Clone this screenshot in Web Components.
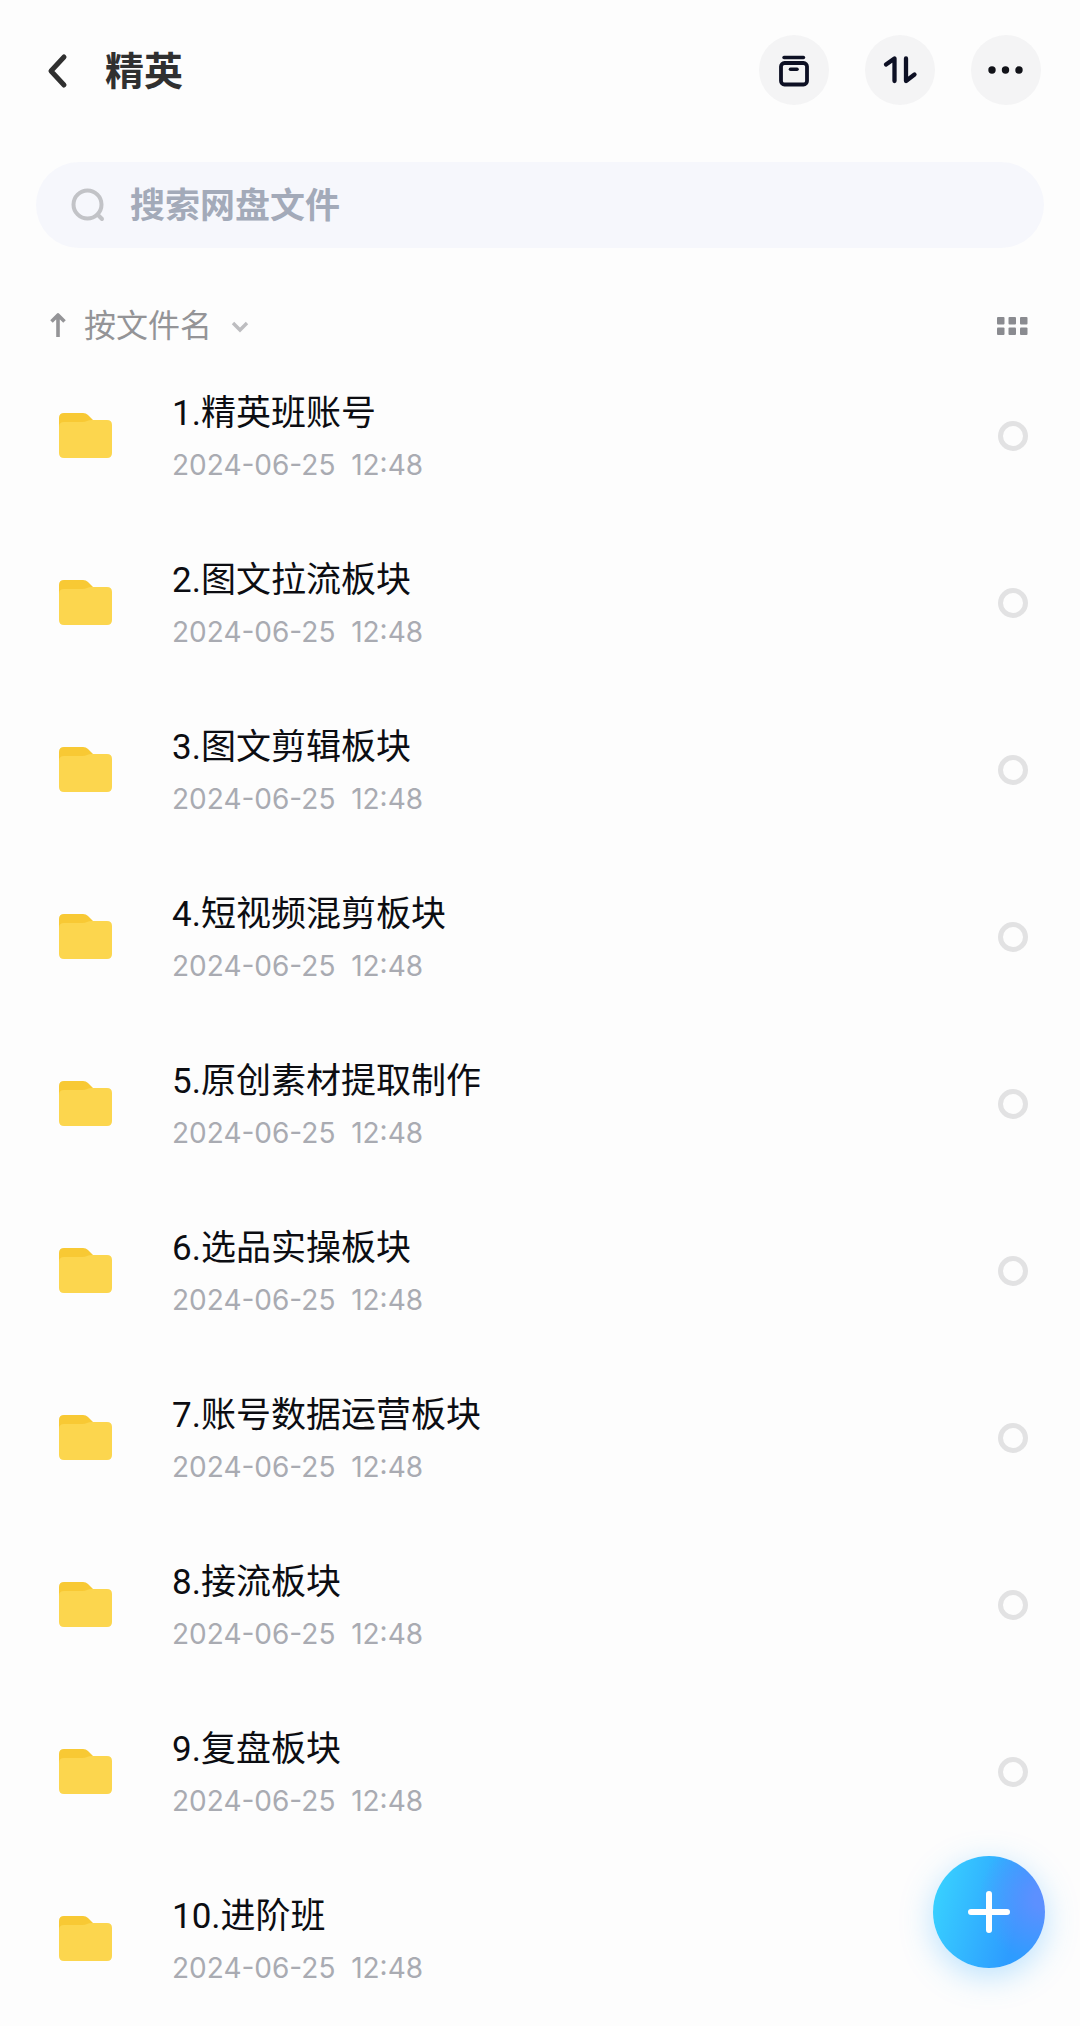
<!DOCTYPE html>
<html lang="zh-CN">
<head>
<meta charset="UTF-8">
<meta name="viewport" content="width=device-width, initial-scale=1">
<title>精英</title>
<style>
  body {
    margin: 0;
    background: #fdfdfd;
    font-family: Roboto, "Noto Sans CJK SC", sans-serif;
    color: #0c0d12;
  }
</style>
</head>
<body>
<drive-page>
  <drive-header slot="header" heading="精英"></drive-header>
  <search-box slot="search" placeholder="搜索网盘文件"></search-box>
  <sort-bar slot="sort">按文件名</sort-bar>
  <file-row time="2024-06-25  12:48">1.精英班账号</file-row>
  <file-row time="2024-06-25  12:48">2.图文拉流板块</file-row>
  <file-row time="2024-06-25  12:48">3.图文剪辑板块</file-row>
  <file-row time="2024-06-25  12:48">4.短视频混剪板块</file-row>
  <file-row time="2024-06-25  12:48">5.原创素材提取制作</file-row>
  <file-row time="2024-06-25  12:48">6.选品实操板块</file-row>
  <file-row time="2024-06-25  12:48">7.账号数据运营板块</file-row>
  <file-row time="2024-06-25  12:48">8.接流板块</file-row>
  <file-row time="2024-06-25  12:48">9.复盘板块</file-row>
  <file-row time="2024-06-25  12:48">10.进阶班</file-row>
  <add-button slot="action"></add-button>
</drive-page>

<script>
/** Page frame: header, search, sort bar, then the list of files */
class DrivePage extends HTMLElement {
  constructor() {
    super();
    this.attachShadow({ mode: "open" });
  }

  connectedCallback() {
    this.shadowRoot.innerHTML = `
      <style>
        :host {
          display: flex;
          flex-direction: column;
          min-height: 100vh;
        }

        main {
          display: flex;
          flex-direction: column;
        }
      </style>
      <slot name="header"></slot>
      <slot name="search"></slot>
      <slot name="sort"></slot>
      <main><slot></slot></main>
      <slot name="action"></slot>
    `;
  }
}

class DriveHeader extends HTMLElement {
  constructor() {
    super();
    this.attachShadow({ mode: "open" });
  }

  connectedCallback() {
    this.shadowRoot.innerHTML = `
      <style>
        :host {
          display: block;
        }

        header {
          display: flex;
          align-items: center;
          height: 140px;
          padding: 0 39px 0 36px;
        }

        button {
          display: flex;
          align-items: center;
          justify-content: center;
          padding: 0;
          border: none;
          background: none;
          cursor: pointer;
        }

        .back {
          width: 44px;
          height: 70px;
        }

        h1 {
          flex: 1;
          margin: 0 0 0 25px;
          padding-top: 4px;
          font-size: 39px;
          line-height: 56px;
          font-weight: 700;
          color: #303030;
        }

        .tools {
          display: flex;
          gap: 36px;
        }

        .tools button {
          width: 70px;
          height: 70px;
          border-radius: 50%;
          background: #f4f4f5;
        }
      </style>
      <header>
        <button class="back" aria-label="返回">
          <svg width="44" height="40" viewBox="0 0 44 40" fill="none" stroke="#303030" stroke-width="5" stroke-linecap="round" stroke-linejoin="round">
            <path d="M28 7 15 21 28 35"/>
          </svg>
        </button>
        <h1>${this.getAttribute("heading")}</h1>
        <div class="tools">
          <button aria-label="文件箱">
            <svg width="36" height="36" viewBox="0 0 36 36" fill="none" stroke="#0d1024" stroke-width="3.8" stroke-linecap="round" stroke-linejoin="round">
              <path d="M8 5.5H27.500" stroke-width="3.400"/>
              <rect x="5" y="11" width="26" height="21.500" rx="3.500"/>
              <path d="M14.500 17.200H21" stroke-width="3.600"/>
            </svg>
          </button>
          <button aria-label="传输">
            <svg width="36" height="36" viewBox="0 0 36 36" fill="none" stroke="#0d1024" stroke-width="4.300" stroke-linecap="round" stroke-linejoin="round">
              <path d="M4 12.500 12.500 6.500V29"/>
              <path d="M24 6.500V29L32.500 22.500"/>
            </svg>
          </button>
          <button aria-label="更多">
            <svg width="36" height="36" viewBox="0 0 36 36" fill="#111218">
              <circle cx="4" cy="18" r="3.700"/>
              <circle cx="17.500" cy="18" r="3.700"/>
              <circle cx="31" cy="18" r="3.700"/>
            </svg>
          </button>
        </div>
      </header>
    `;
  }
}

class SearchBox extends HTMLElement {
  constructor() {
    super();
    this.attachShadow({ mode: "open" });
  }

  connectedCallback() {
    const placeholder = this.getAttribute("placeholder");
    this.shadowRoot.innerHTML = `
      <style>
        :host {
          display: block;
          padding: 22px 36px 0;
        }

        .field {
          display: flex;
          align-items: center;
          gap: 24px;
          height: 86px;
          padding: 0 36px 0 34px;
          border-radius: 43px;
          background: #f6f7fc;
        }

        svg {
          flex: none;
        }

        input {
          flex: 1;
          min-width: 0;
          height: 56px;
          padding: 3px 0 0;
          border: none;
          outline: none;
          background: none;
          font: inherit;
          font-size: 35px;
          font-weight: 700;
          color: #303030;
        }

        input::placeholder {
          color: #a3aab9;
          opacity: 1;
        }
      </style>
      <div class="field">
        <svg width="36" height="36" viewBox="0 0 36 36" fill="none" stroke="#c2c3c7" stroke-width="4" stroke-linecap="round">
          <circle cx="17.500" cy="17.500" r="14"/>
          <path d="M28 28 32 32"/>
        </svg>
        <input type="text" placeholder="${placeholder}" aria-label="${placeholder}">
      </div>
    `;
  }
}

class SortBar extends HTMLElement {
  constructor() {
    super();
    this.attachShadow({ mode: "open" });
  }

  connectedCallback() {
    this.shadowRoot.innerHTML = `
      <style>
        :host {
          display: flex;
          align-items: center;
          height: 52px;
          padding: 52px 49px 0 48px;
        }

        button {
          display: flex;
          align-items: center;
          justify-content: center;
          height: 48px;
          padding: 0;
          border: none;
          background: none;
          cursor: pointer;
        }

        .picker {
          display: flex;
          align-items: center;
          flex: 1;
          gap: 17px;
          margin-left: 16px;
        }

        select {
          appearance: none;
          padding: 0;
          border: none;
          outline: none;
          background: none;
          font: inherit;
          font-size: 32px;
          line-height: 48px;
          color: #949497;
        }
      </style>
      <button aria-label="升序">
        <svg width="20" height="28" viewBox="0 0 20 28" fill="none" stroke="#949497" stroke-width="3.600" stroke-linejoin="round">
          <path d="M10 25V3M3.500 9.500 10 3 16.500 9.500"/>
        </svg>
      </button>
      <div class="picker">
        <select aria-label="排序方式"><option>${this.textContent}</option></select>
        <svg width="20" height="20" viewBox="0 0 20 20" fill="none" stroke="#bdbdc0" stroke-width="3.400">
          <path d="M3 7 10 14 17 7"/>
        </svg>
      </div>
      <button aria-label="宫格视图">
        <svg width="36" height="20" viewBox="0 0 36 20" fill="#8a8b90">
          <rect x="2" y="1" width="7.500" height="7.500" rx="1"/>
          <rect x="13.500" y="1" width="7.500" height="7.500" rx="1"/>
          <rect x="25" y="1" width="7.500" height="7.500" rx="1"/>
          <rect x="2" y="11.500" width="7.500" height="7.500" rx="1"/>
          <rect x="13.500" y="11.500" width="7.500" height="7.500" rx="1"/>
          <rect x="25" y="11.500" width="7.500" height="7.500" rx="1"/>
        </svg>
      </button>
    `;
  }
}

/** One folder: icon, name, time and the select circle */
class FileRow extends HTMLElement {
  constructor() {
    super();
    this.attachShadow({ mode: "open" });
  }

  connectedCallback() {
    this.shadowRoot.innerHTML = `
      <style>
        :host {
          display: flex;
          align-items: center;
          height: 167px;
          padding: 0 52px 0 59px;
        }

        svg {
          flex: none;
        }

        .text {
          display: flex;
          flex-direction: column;
          flex: 1;
          min-width: 0;
          margin-left: 60px;
        }

        label {
          font-size: 35px;
          line-height: 58px;
        }

        time {
          font-family: Inter, sans-serif;
          font-size: 28px;
          line-height: 44px;
          white-space: pre;
          color: #a9abb2;
        }

        input {
          appearance: none;
          box-sizing: border-box;
          width: 30px;
          height: 30px;
          margin: 0;
          border: 5px solid #e2e2e3;
          border-radius: 50%;
        }

        input:checked {
          border-color: #2f9bff;
        }
      </style>
      <svg width="53" height="45" viewBox="0 0 53 45">
        <path d="M5 0H24Q27 0 29 2L34 7V20H0V5Q0 0 5 0Z" fill="#f8c934"/>
        <path d="M0 14Q0 9 5 9H23Q26 9 28 8Q30 7 33 7H48Q53 7 53 12V40Q53 45 48 45H5Q0 45 0 40Z" fill="#fcd64e"/>
      </svg>
      <div class="text">
        <label for="pick"><slot></slot></label>
        <time>${this.getAttribute("time")}</time>
      </div>
      <input id="pick" type="checkbox">
    `;
  }
}

class AddButton extends HTMLElement {
  constructor() {
    super();
    this.attachShadow({ mode: "open" });
  }

  connectedCallback() {
    this.shadowRoot.innerHTML = `
      <style>
        :host {
          position: fixed;
          right: 35px;
          bottom: 58px;
        }

        button {
          display: flex;
          align-items: center;
          justify-content: center;
          width: 112px;
          height: 112px;
          padding: 0;
          border: none;
          border-radius: 50%;
          background:
            radial-gradient(circle at 100% 38%, #5c90ff 8%, rgba(92, 144, 255, 0) 50%),
            linear-gradient(105deg, #38d0ff 8%, #2d9cff 72%);
          box-shadow: 0 8px 32px rgba(60, 175, 255, 0.35);
          cursor: pointer;
        }
      </style>
      <button aria-label="新建">
        <svg width="44" height="44" viewBox="0 0 44 44" stroke="#fff" stroke-width="6" stroke-linecap="round">
          <path d="M22 4V40M4 22H40"/>
        </svg>
      </button>
    `;
  }
}

customElements.define("drive-page", DrivePage);
customElements.define("drive-header", DriveHeader);
customElements.define("search-box", SearchBox);
customElements.define("sort-bar", SortBar);
customElements.define("file-row", FileRow);
customElements.define("add-button", AddButton);
</script>
</body>
</html>
